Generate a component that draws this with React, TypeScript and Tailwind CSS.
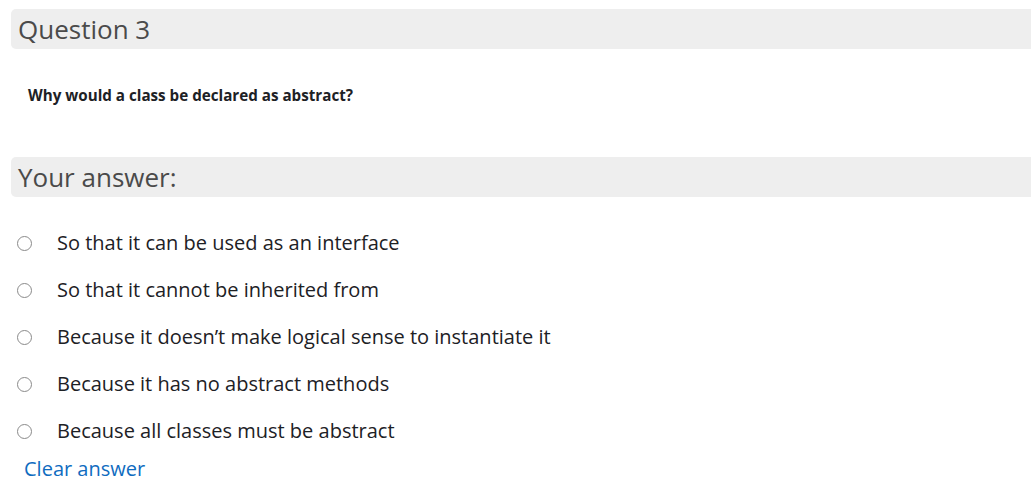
import React from 'react';

const options = [
  'So that it can be used as an interface',
  'So that it cannot be inherited from',
  'Because it doesn\u2019t make logical sense to instantiate it',
  'Because it has no abstract methods',
  'Because all classes must be abstract',
];

export default function App() {
  return (
    <div className="min-h-screen bg-white pl-[11px] pt-[9px] text-[#333]" style={{ fontFamily: '"Open Sans", sans-serif' }}>
      {/* Question header */}
      <div className="flex h-[40px] items-center rounded-l-[5px] bg-[#eeeeee] pl-[7px]">
        <h2 className="text-[26px] font-normal leading-none text-[#4a4a4a]">Question 3</h2>
      </div>

      <p className="mt-[37px] pl-[17px] text-[15.2px] font-bold leading-[18px] text-[#1d2125]">
        Why would a class be declared as abstract?
      </p>

      {/* Answer header */}
      <div className="mt-[53px] flex h-[40px] items-center rounded-l-[5px] bg-[#eeeeee] pl-[7px]">
        <h3 className="text-[26px] font-normal leading-none text-[#4a4a4a]">Your answer:</h3>
      </div>

      <div className="mt-[33px] flex flex-col gap-[21px]">
        {options.map((opt) => (
          <label key={opt} className="flex h-[26px] items-center">
            <span className="ml-[6px] h-[15px] w-[15px] rounded-full border border-[#8a8a8a] bg-white" />
            <span className="ml-[25px] text-[20px] leading-[26px] text-[#1d2125]">{opt}</span>
          </label>
        ))}
      </div>

      <a href="#" className="ml-[13px] mt-[12px] block text-[20px] leading-[26px] text-[#0f6cbf]">
        Clear answer
      </a>
    </div>
  );
}
